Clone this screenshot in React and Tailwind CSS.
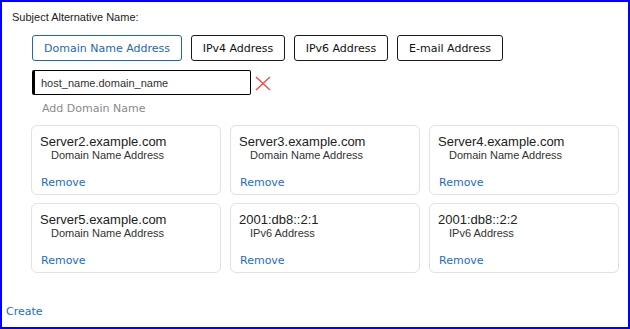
import { useState } from "react";

const types = [
  { label: "Domain Name Address", width: "w-[150px]" },
  { label: "IPv4 Address", width: "w-[94px]" },
  { label: "IPv6 Address", width: "w-[94px]" },
  { label: "E-mail Address", width: "w-[106px]" },
];

const entries = [
  { name: "Server2.example.com", type: "Domain Name Address" },
  { name: "Server3.example.com", type: "Domain Name Address" },
  { name: "Server4.example.com", type: "Domain Name Address" },
  { name: "Server5.example.com", type: "Domain Name Address" },
  { name: "2001:db8::2:1", type: "IPv6 Address" },
  { name: "2001:db8::2:2", type: "IPv6 Address" },
];

const arial = "font-['Liberation_Sans',Arial,sans-serif]";
const verdana = "font-['DejaVu_Sans',Verdana,sans-serif]";

const App = () => {
  const [active, setActive] = useState("Domain Name Address");
  const [value, setValue] = useState("host_name.domain_name");

  return (
    <div className="w-[630px] h-[329px] border-2 border-[#0000ff] bg-white flex flex-col">
      <div className={`${arial} text-[11px] leading-[13px] text-[#222] mt-[9px] pl-[10px]`}>
        Subject Alternative Name:
      </div>

      <div className="ml-[30px] mt-[11px] flex flex-col">
        <div className="flex gap-[9px]">
          {types.map((t) => (
            <button
              key={t.label}
              onClick={() => setActive(t.label)}
              className={`${verdana} ${t.width} h-[26px] flex items-center justify-center border rounded-[3px] text-[11px] leading-[13px] bg-white ${
                active === t.label
                  ? "border-[#1e68b0] text-[#1e68b0]"
                  : "border-[#1a1a1a] text-[#111]"
              }`}
            >
              {t.label}
            </button>
          ))}
        </div>

        <div className="flex items-center mt-[9px]">
          <input
            value={value}
            onChange={(e) => setValue(e.target.value)}
            className={`${arial} w-[219px] h-[25px] border border-black border-l-[3px] rounded-[2px] pl-[6px] text-[11px] text-[#333] outline-none`}
          />
          <svg width="16" height="15" viewBox="0 0 16 15" className="ml-[4px] mt-[2px]">
            <path d="M1 1 L15 14 M15 1 L1 14" stroke="#f24b4b" strokeWidth="1.4" fill="none" />
          </svg>
        </div>

        <div className={`${verdana} text-[11px] leading-[13px] text-[#8a8a8a] mt-[7px] pl-[10px]`}>
          Add Domain Name
        </div>

        <div className="grid grid-cols-[190px_190px_190px] gap-x-[9px] gap-y-[8px] mt-[10px] -ml-[1px]">
          {entries.map((e) => (
            <div
              key={e.name}
              className="h-[70px] border border-[#e2e2e2] rounded-[6px] pt-[9px] pl-[8px] flex flex-col"
            >
              <div className={`${arial} text-[13px] leading-[14px] text-[#222]`}>{e.name}</div>
              <div className={`${arial} text-[11px] leading-[13px] text-[#333] pl-[11px]`}>{e.type}</div>
              <div className={`${verdana} text-[11px] leading-[13px] text-[#1b6ec2] mt-[14px] pl-[1px]`}>Remove</div>
            </div>
          ))}
        </div>
      </div>

      <div className={`${verdana} text-[11px] leading-[13px] text-[#1b6ec2] mt-[32px] pl-[4px]`}>
        Create
      </div>
    </div>
  );
};

export default App;
